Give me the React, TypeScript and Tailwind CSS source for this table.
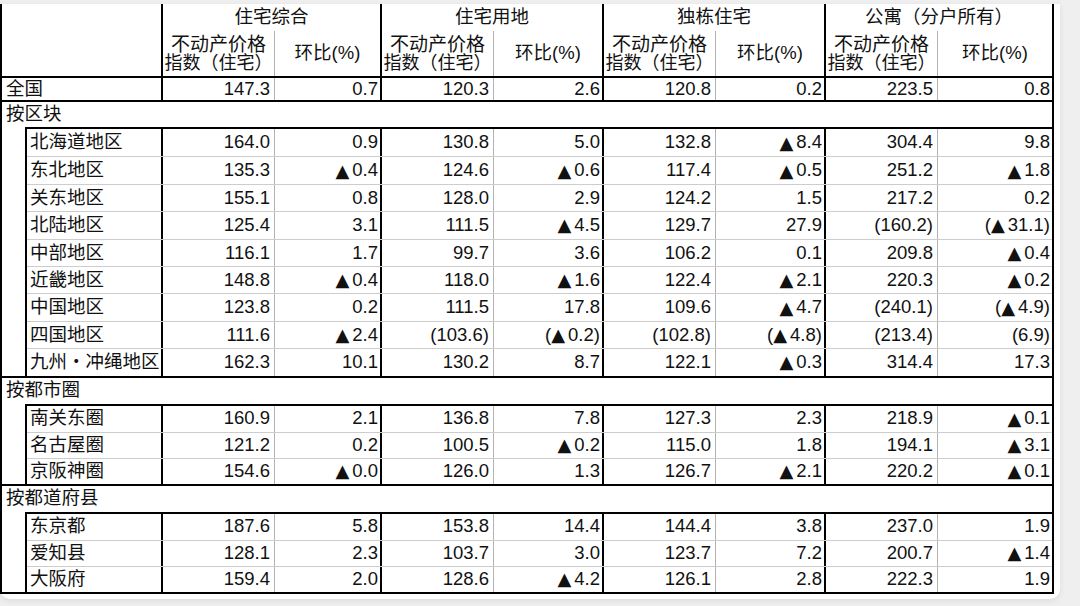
import React from 'react';

const groups = [
  { title: '住宅综合', w: 'w-[219px]', hc: 'w-[106px]' },
  { title: '住宅用地', w: 'w-[222px]', hc: 'w-[109px]' },
  { title: '独栋住宅', w: 'w-[222px]', hc: 'w-[109px]' },
  { title: '公寓（分户所有）', w: 'w-[228px]', hc: 'w-[115px]' },
];

const hcWidths = ['w-[106px]', 'w-[109px]', 'w-[109px]', 'w-[115px]'];

type Row = [string, string[]];

const blocks: { title: string; top: boolean; h: string; rowH: string; rows: Row[] }[] = [
  {
    title: '按区块',
    top: false,
    h: 'h-[25px]',
    rowH: 'h-[27.4px]',
    rows: [
      ['北海道地区', ['164.0', '0.9', '130.8', '5.0', '132.8', '▲8.4', '304.4', '9.8']],
      ['东北地区', ['135.3', '▲0.4', '124.6', '▲0.6', '117.4', '▲0.5', '251.2', '▲1.8']],
      ['关东地区', ['155.1', '0.8', '128.0', '2.9', '124.2', '1.5', '217.2', '0.2']],
      ['北陆地区', ['125.4', '3.1', '111.5', '▲4.5', '129.7', '27.9', '(160.2)', '(▲31.1)']],
      ['中部地区', ['116.1', '1.7', '99.7', '3.6', '106.2', '0.1', '209.8', '▲0.4']],
      ['近畿地区', ['148.8', '▲0.4', '118.0', '▲1.6', '122.4', '▲2.1', '220.3', '▲0.2']],
      ['中国地区', ['123.8', '0.2', '111.5', '17.8', '109.6', '▲4.7', '(240.1)', '(▲4.9)']],
      ['四国地区', ['111.6', '▲2.4', '(103.6)', '(▲0.2)', '(102.8)', '(▲4.8)', '(213.4)', '(6.9)']],
      ['九州・冲绳地区', ['162.3', '10.1', '130.2', '8.7', '122.1', '▲0.3', '314.4', '17.3']],
    ],
  },
  {
    title: '按都市圈',
    top: true,
    h: 'h-[28px]',
    rowH: 'h-[26px]',
    rows: [
      ['南关东圈', ['160.9', '2.1', '136.8', '7.8', '127.3', '2.3', '218.9', '▲0.1']],
      ['名古屋圈', ['121.2', '0.2', '100.5', '▲0.2', '115.0', '1.8', '194.1', '▲3.1']],
      ['京阪神圈', ['154.6', '▲0.0', '126.0', '1.3', '126.7', '▲2.1', '220.2', '▲0.1']],
    ],
  },
  {
    title: '按都道府县',
    top: true,
    h: 'h-[28px]',
    rowH: 'h-[26px]',
    rows: [
      ['东京都', ['187.6', '5.8', '153.8', '14.4', '144.4', '3.8', '237.0', '1.9']],
      ['爱知县', ['128.1', '2.3', '103.7', '3.0', '123.7', '7.2', '200.7', '▲1.4']],
      ['大阪府', ['159.4', '2.0', '128.6', '▲4.2', '126.1', '2.8', '222.3', '1.9']],
    ],
  },
];

// ▲ rendered in DejaVu so it matches the larger triangle of the source
function Num({ v }: { v: string }) {
  if (!v.includes('▲')) return <>{v}</>;
  const [pre, post] = v.split('▲');
  return (
    <>
      {pre}
      <span className="font-['DejaVu_Sans',sans-serif] text-[18px] mr-[3px]">▲</span>
      {post}
    </>
  );
}

function Cells({ vals }: { vals: string[] }) {
  return (
    <>
      {vals.map((v, i) =>
        i % 2 === 0 ? (
          <div key={i} className="w-[113px] h-full border-l-2 border-black flex items-center justify-end pr-[4px] text-[18.5px]">
            <Num v={v} />
          </div>
        ) : (
          <div key={i} className={`${hcWidths[(i - 1) / 2]} h-full border-l border-[#b3b3b3] flex items-center justify-end pr-[2px] text-[18.5px]`}>
            <Num v={v} />
          </div>
        )
      )}
    </>
  );
}

export default function App() {
  return (
    <div className="h-[606px] bg-[#efefef] pt-[4px] overflow-hidden font-['Liberation_Sans','Noto_Sans_CJK_SC',sans-serif] text-[#111]">
      <div className="w-[1060px] h-[595px] bg-white rounded-b-[10px] shadow-[0_2px_6px_rgba(0,0,0,0.08)]">
        <div className="w-[1054px] border-l-2 border-r-2 border-b-2 border-black leading-none">
          {/* header */}
          <div className="flex h-[74px] border-b-2 border-black">
            <div className="w-[159px]" />
            {groups.map((g) => (
              <div key={g.title} className={`${g.w} flex flex-col border-l-2 border-black`}>
                <div className="h-[27px] flex items-center justify-center text-[18.5px]">{g.title}</div>
                <div className="flex h-[45px]">
                  <div className="w-[111px] flex flex-col items-center justify-center text-center leading-[19px] whitespace-nowrap">
                    <span className="text-[19px]">不动产价格</span>
                    <span className="text-[18px]">指数（住宅）</span>
                  </div>
                  <div className={`${g.hc} border-l border-[#b3b3b3] flex items-center justify-center text-[18.5px]`}>环比(%)</div>
                </div>
              </div>
            ))}
          </div>

          {/* 全国 */}
          <div className="flex h-[24px] border-b-2 border-black">
            <div className="w-[159px] h-full flex items-center pl-[4px] text-[18.5px]">全国</div>
            <Cells vals={['147.3', '0.7', '120.3', '2.6', '120.8', '0.2', '223.5', '0.8']} />
          </div>

          {blocks.map((b) => (
            <div key={b.title}>
              <div className={`${b.h} flex items-center pl-[4px] text-[18.5px] ${b.top ? 'border-t-2 border-black' : ''}`}>
                {b.title}
              </div>
              <div className="flex">
                <div className="w-[23px]" />
                <div className="w-[1029px] border-l-2 border-t-2 border-black">
                  {b.rows.map(([label, vals], i) => (
                    <div key={label} className={`flex ${b.rowH} ${i > 0 ? 'border-t border-[#cdcdcd]' : ''}`}>
                      <div className="w-[134px] h-full flex items-center pl-[3px] text-[18.5px] whitespace-nowrap">{label}</div>
                      <Cells vals={vals} />
                    </div>
                  ))}
                </div>
              </div>
            </div>
          ))}
        </div>
      </div>
    </div>
  );
}
